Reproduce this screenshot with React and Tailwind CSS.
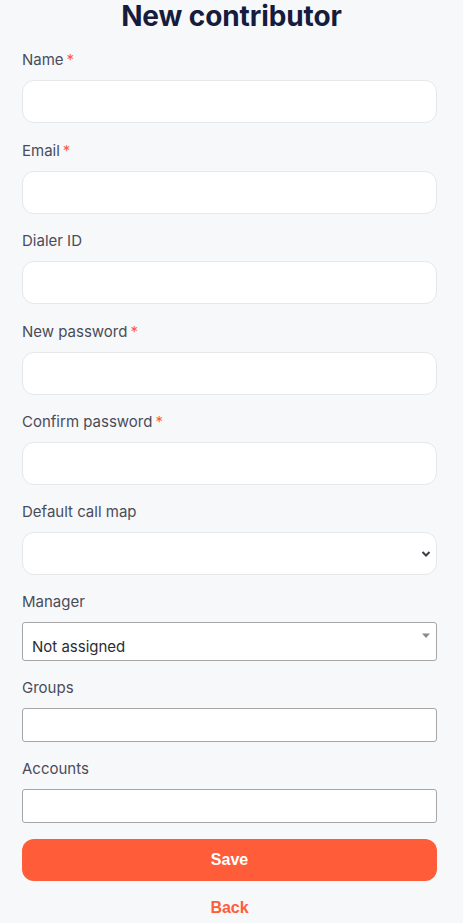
import React from "react";

const font = { fontFamily: "Inter, 'Noto Sans', sans-serif" };

function Label({ children, required }) {
  return (
    <div className="h-[20px] leading-[20px] text-[15px] text-[#4a4c58] flex items-center">
      <span>{children}</span>
      {required && <span className="ml-[3px] text-[#ff5c39]">*</span>}
    </div>
  );
}

function RoundInput() {
  return (
    <input
      type="text"
      className="mt-[10px] block w-full h-[43px] rounded-[12px] border border-[#e6e7ea] bg-white px-3 outline-none"
    />
  );
}

function SquareInput() {
  return (
    <input
      type="text"
      className="mt-[10px] block w-full h-[34px] rounded-[3px] border border-[#a6a6a6] bg-white px-2 outline-none"
    />
  );
}

export default function App() {
  return (
    <div className="min-h-[923px] bg-[#f7f8fa] pl-[22px] pr-[26px]" style={font}>
      <h1 className="h-[32px] leading-[32px] text-center text-[28px] font-bold text-[#161c3d] tracking-[-0.1px] pl-[4px]">
        New contributor
      </h1>

      <div className="mt-[18px]">
        <Label required>Name</Label>
        <RoundInput />
      </div>
      <div className="mt-[17.5px]">
        <Label required>Email</Label>
        <RoundInput />
      </div>
      <div className="mt-[17.5px]">
        <Label>Dialer ID</Label>
        <RoundInput />
      </div>
      <div className="mt-[17.5px]">
        <Label required>New password</Label>
        <RoundInput />
      </div>
      <div className="mt-[17.5px]">
        <Label required>Confirm password</Label>
        <RoundInput />
      </div>
      <div className="mt-[17px]">
        <Label>Default call map</Label>
        <div className="mt-[10px] w-full h-[43px] rounded-[12px] border border-[#e6e7ea] bg-white flex items-center justify-end pr-[5px]">
          <svg width="10" height="8" viewBox="0 0 10 8">
            <path d="M1.5 2 L5 5.5 L8.5 2" fill="none" stroke="#3a3d45" strokeWidth="2" />
          </svg>
        </div>
      </div>

      <div className="mt-[16.5px]">
        <Label>Manager</Label>
        <div className="relative mt-[10px] w-full h-[39px] rounded-[3px] border border-[#a6a6a6] bg-white pl-[9px] pt-[14px]">
          <div className="text-[15px] leading-[20px] text-[#2b2c33]">Not assigned</div>
          <svg className="absolute right-[5px] top-[10px]" width="10" height="6" viewBox="0 0 10 6">
            <path d="M1 0.5 H9 L5 5 Z" fill="#8a8a8a" />
          </svg>
        </div>
      </div>

      <div className="mt-[17px]">
        <Label>Groups</Label>
        <SquareInput />
      </div>
      <div className="mt-[17.5px]">
        <Label>Accounts</Label>
        <SquareInput />
      </div>

      <button
        className="mt-[15.5px] w-full h-[42px] rounded-[12px] bg-[#ff5c39] text-white text-[16px] font-bold"
        style={{ fontFamily: "'Liberation Sans', Arial, sans-serif" }}
      >
        Save
      </button>
      <div
        className="mt-[17px] h-[20px] leading-[20px] text-center text-[16px] font-bold text-[#ff5c39]"
        style={{ fontFamily: "'Liberation Sans', Arial, sans-serif" }}
      >
        Back
      </div>
    </div>
  );
}
